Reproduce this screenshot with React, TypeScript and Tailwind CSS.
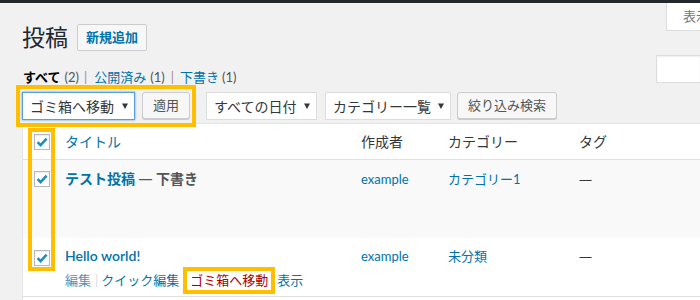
import React from "react";

function Check() {
  return (
    <div className="w-[16px] h-[16px] border border-[#b4b9be] bg-white shadow-[inset_0_1px_2px_rgba(0,0,0,0.1)] flex items-center justify-center">
      <svg width="14" height="14" viewBox="0 0 14 14">
        <path d="M2.6 7.1 L5.6 10.1 L11.6 3.6" fill="none" stroke="#1e8cbe" strokeWidth="2.5" />
      </svg>
    </div>
  );
}

function Arrow() {
  return (
    <svg width="6" height="6" viewBox="0 0 6 6" className="shrink-0">
      <polygon points="0,0.5 6,0.5 3,6" fill="#32373c" />
    </svg>
  );
}

export default function App() {
  return (
    <div className="relative w-[700px] h-[300px] overflow-hidden bg-[#f1f1f1] font-[family-name:Lato,'Noto_Sans_CJK_JP',sans-serif] text-[#32373c]">
      <div className="h-[3px] bg-[#23282d]" />

      {/* heading row */}
      <div className="flex h-[52px]">
        <div className="pl-[22px] pt-[21px] flex items-start">
          <div className="flex items-center h-[27px]">
            <h1 className="text-[23px] leading-[27px] font-normal text-[#23282d]">投稿</h1>
            <div className="ml-[9px] w-[70px] h-[27px] border border-[#ccc] bg-[#f7f7f7] rounded-[2px] flex items-center justify-center text-[13px] font-bold text-[#0073aa]">
              新規追加
            </div>
          </div>
        </div>
        <div className="ml-auto w-[34px] h-[28px] bg-white border-l border-b border-[#ddd] pl-[16px] text-[13px] leading-[27px] text-[#72777c] whitespace-nowrap overflow-hidden">
          表示
        </div>
      </div>

      {/* subsubsub + search */}
      <div className="flex h-[30px]">
        <div className="pl-[23px] self-end flex items-center h-[16px] text-[13px] leading-[16px] whitespace-nowrap">
          <span className="font-bold text-black">すべて</span>
          <span className="ml-[4px] text-[#555]">(2)</span>
          <span className="ml-[5px] text-[#a08c8c]">|</span>
          <span className="ml-[7px] text-[#0073aa]">公開済み</span>
          <span className="ml-[4px] text-[#555]">(1)</span>
          <span className="ml-[6px] text-[#a08c8c]">|</span>
          <span className="ml-[6px] text-[#0073aa]">下書き</span>
          <span className="ml-[3px] text-[#555]">(1)</span>
        </div>
        <div className="ml-auto w-[44px] h-[28px] border border-r-0 border-[#ddd] bg-white shadow-[inset_0_1px_2px_rgba(0,0,0,0.07)]" />
      </div>

      {/* tablenav */}
      <div className="flex items-start pl-[22px] pt-[7px] h-[38px] whitespace-nowrap">
        <div className="w-[113px] h-[28px] border border-[#5b9dd9] shadow-[0_0_2px_rgba(30,140,190,0.8)] bg-white flex items-center justify-between pl-[7px] pr-[6px] text-[14px] text-[#32373c]">
          <span>ゴミ箱へ移動</span>
          <Arrow />
        </div>
        <div className="ml-[7px] w-[48px] h-[27px] border border-[#ccc] bg-[#f7f7f7] rounded-[3px] shadow-[0_1px_0_#ccc] text-[13px] text-[#555] flex items-center justify-center">
          適用
        </div>
        <div className="ml-[16px] w-[111px] h-[28px] border border-[#ddd] bg-white flex items-center justify-between pl-[7px] pr-[6px] text-[14px] text-[#32373c]">
          <span>すべての日付</span>
          <Arrow />
        </div>
        <div className="ml-[8px] w-[126px] h-[28px] border border-[#ddd] bg-white flex items-center justify-between pl-[7px] pr-[6px] text-[14px] text-[#32373c]">
          <span>カテゴリー一覧</span>
          <Arrow />
        </div>
        <div className="ml-[6px] w-[100px] h-[27px] border border-[#ccc] bg-[#f7f7f7] rounded-[3px] shadow-[0_1px_0_#ccc] text-[13px] text-[#555] flex items-center justify-center">
          絞り込み検索
        </div>
      </div>

      {/* table */}
      <div className="ml-[22px] border-l border-t border-[#e5e5e5] bg-white h-[200px]">
        <div className="grid grid-cols-[42px_296px_87px_131px_1fr] h-[36px] items-center border-b border-[#e1e1e1] text-[14px]">
          <div className="pl-[11px]">
            <Check />
          </div>
          <div className="text-[#0073aa]">タイトル</div>
          <div>作成者</div>
          <div>カテゴリー</div>
          <div>タグ</div>
        </div>

        <div className="grid grid-cols-[42px_296px_87px_131px_1fr] h-[78px] items-start bg-[#f9f9f9] text-[13px] leading-[20px]">
          <div className="pl-[11px] pt-[11px]">
            <Check />
          </div>
          <div className="pt-[9px] text-[14px] font-semibold whitespace-nowrap">
            <span className="text-[#0073aa]">テスト投稿</span>
            <span className="text-[#555]">
              {" "}
              <span className="font-['Noto_Sans'] font-normal">—</span> 下書き
            </span>
          </div>
          <div className="pt-[9px] text-[#0073aa]">example</div>
          <div className="pt-[9px] text-[#0073aa]">カテゴリー1</div>
          <div className="pt-[9px] font-['Noto_Sans']">—</div>
        </div>

        <div className="grid grid-cols-[42px_296px_87px_131px_1fr] h-[59px] items-start bg-white border-b border-[#e1e1e1] text-[13px] leading-[20px]">
          <div className="pl-[11px] pt-[12px]">
            <Check />
          </div>
          <div className="pt-[8px] whitespace-nowrap">
            <div className="text-[14px] font-semibold text-[#0073aa]">Hello world!</div>
            <div className="flex items-center h-[28px] text-[13px]">
              <span className="text-[#4f93bf]">編集</span>
              <span className="ml-[4px] text-[#ddd]">|</span>
              <span className="ml-[3px] text-[#0073aa]">クイック編集</span>
              <span className="ml-[4px] w-[92px] h-[27px] border-[4px] border-[#ffbf00] bg-white flex items-center justify-center text-[#a00]">
                ゴミ箱へ移動
              </span>
              <span className="ml-[2px] text-[#0073aa]">表示</span>
            </div>
          </div>
          <div className="pt-[8px] text-[#0073aa]">example</div>
          <div className="pt-[8px] text-[#0073aa]">未分類</div>
          <div className="pt-[8px] font-['Noto_Sans']">—</div>
        </div>
      </div>

      {/* annotation overlays */}
      <div className="absolute left-[16px] top-[85px] w-[180px] h-[42px] border-[4px] border-[#ffbf00] pointer-events-none" />
      <div className="absolute left-[28px] top-[128px] w-[27px] h-[143px] border-[4px] border-[#ffbf00] pointer-events-none" />
    </div>
  );
}
